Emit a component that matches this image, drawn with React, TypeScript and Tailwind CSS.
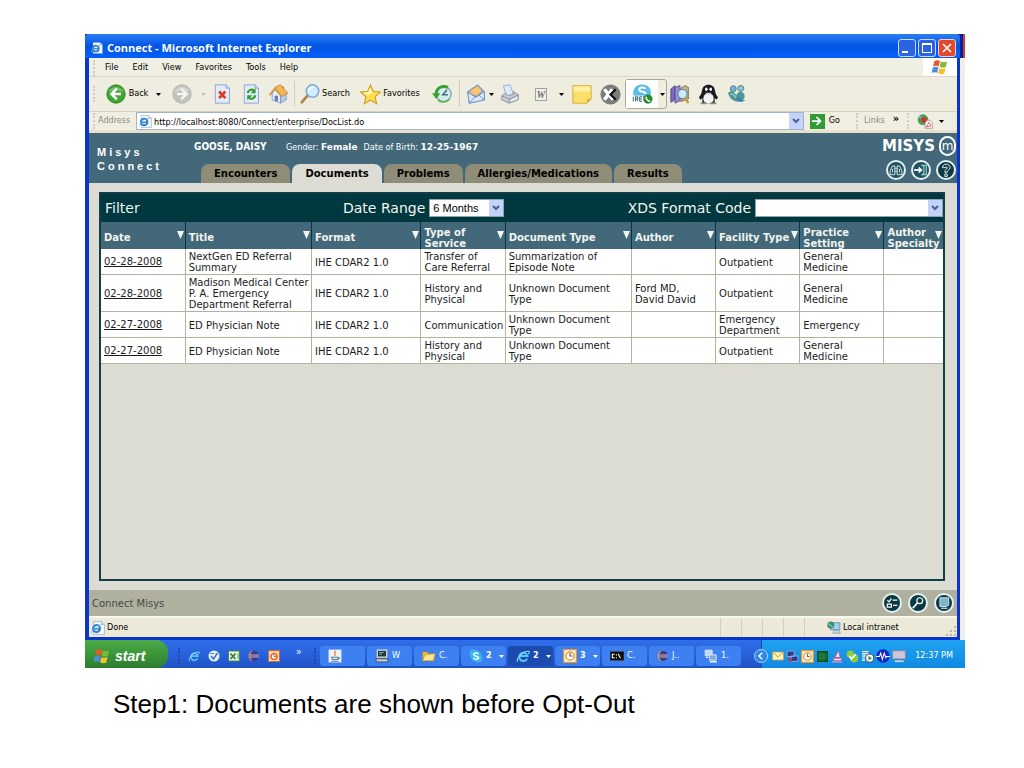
import { useState } from 'react';
import type { ReactNode } from 'react';

type DocRow = {
  date: string;
  title: string;
  format: string;
  service: string;
  docType: string;
  author: string;
  facility: string;
  setting: string;
  specialty: string;
};

const documents: DocRow[] = [
  { date: '02-28-2008', title: 'NextGen ED Referral\nSummary', format: 'IHE CDAR2 1.0', service: 'Transfer of\nCare Referral', docType: 'Summarization of\nEpisode Note', author: '', facility: 'Outpatient', setting: 'General\nMedicine', specialty: '' },
  { date: '02-28-2008', title: 'Madison Medical Center\nP. A. Emergency\nDepartment Referral', format: 'IHE CDAR2 1.0', service: 'History and\nPhysical', docType: 'Unknown Document\nType', author: 'Ford MD,\nDavid David', facility: 'Outpatient', setting: 'General\nMedicine', specialty: '' },
  { date: '02-27-2008', title: 'ED Physician Note', format: 'IHE CDAR2 1.0', service: 'Communication', docType: 'Unknown Document\nType', author: '', facility: 'Emergency\nDepartment', setting: 'Emergency', specialty: '' },
  { date: '02-27-2008', title: 'ED Physician Note', format: 'IHE CDAR2 1.0', service: 'History and\nPhysical', docType: 'Unknown Document\nType', author: '', facility: 'Outpatient', setting: 'General\nMedicine', specialty: '' },
];

const columns: { label: string; width: string }[] = [
  { label: 'Date', width: 'w-[10%]' },
  { label: 'Title', width: 'w-[15%]' },
  { label: 'Format', width: 'w-[13%]' },
  { label: 'Type of\nService', width: 'w-[10%]' },
  { label: 'Document Type', width: 'w-[15%]' },
  { label: 'Author', width: 'w-[10%]' },
  { label: 'Facility Type', width: 'w-[10%]' },
  { label: 'Practice\nSetting', width: 'w-[10%]' },
  { label: 'Author\nSpecialty', width: 'w-[7%]' },
];

const tabs = ['Encounters', 'Documents', 'Problems', 'Allergies/Medications', 'Results'];

/* ---------- icons ---------- */

function Svg({ size, box = 24, children }: { size: string; box?: number; children: ReactNode }) {
  return (
    <svg className={`shrink-0 ${size}`} viewBox={`0 0 ${box} ${box}`} fill="none" aria-hidden="true">
      {children}
    </svg>
  );
}

function IePage({ size = 'size-3.5' }: { size?: string }) {
  return (
    <Svg size={size}>
      <path d="M4 1h14l5 5v17H4z" fill="#f4f8fd" stroke="#7d9cc6" />
      <path d="M18 1v5h5" fill="#cfe0f3" stroke="#7d9cc6" />
      <circle cx="9.500" cy="13" r="6" stroke="#2d7fc9" strokeWidth="3.500" />
      <path d="M4 13.500h12" stroke="#2d7fc9" strokeWidth="2.500" />
      <path d="M1 20C3 12 10 6 18 7" stroke="#6fb4ea" strokeWidth="1.500" />
    </Svg>
  );
}

function IeLogo({ size = 'size-3.5' }: { size?: string }) {
  return (
    <Svg size={size}>
      <path d="M19 16.500A7 7 0 1 1 19.500 12H7" stroke="#5cc3f5" strokeWidth="3.500" />
      <path d="M3 22C-1 17 12 3 22 4c2 1 0 4-1 5" stroke="#8fdcff" strokeWidth="1.800" />
    </Svg>
  );
}

function WindowsFlag({ size = 'size-[18px]' }: { size?: string }) {
  return (
    <Svg size={size}>
      <path d="M4.500 4C7 2.500 9.500 2.700 12 4l-1.700 7.200C8 10 5.500 10 2.800 11.200z" fill="#e8592b" />
      <path d="M13.200 4.600c3 1.500 5.500 1.300 8.300 0l-1.800 7.300c-2.800 1.300-5.400 1.200-8.200-.2z" fill="#7fb93c" />
      <path d="M2.500 12.600c2.700-1.200 5.100-1.200 7.500 0l-1.700 7.200c-2.300-1.200-4.800-1.100-7.500 0z" fill="#4a8fe0" />
      <path d="M11.200 13.200c2.800 1.400 5.400 1.500 8.200.2l-1.700 7.200c-2.800 1.300-5.400 1.300-8.200-.2z" fill="#f6c231" />
    </Svg>
  );
}

function NavArrow({ back }: { back?: boolean }) {
  return (
    <Svg size="size-5">
      <circle cx="12" cy="12" r="11" fill={back ? '#3fa535' : '#c3c3bd'} stroke={back ? '#2b7d24' : '#acaca5'} />
      <path d="M3 10C5 2 19 2 21 10c-5-3-13-3-18 0z" fill="#fff" opacity=".3" />
      {back ? (
        <path d="M13 5.500 6.500 12l6.500 6.500M7 12h11" stroke="#fff" strokeWidth="3" />
      ) : (
        <path d="M11 5.500 17.500 12 11 18.500M17 12H6" stroke="#f4f4f0" strokeWidth="3" />
      )}
    </Svg>
  );
}

function StopIcon() {
  return (
    <Svg size="size-5">
      <path d="M4 1h13l4 4v18H4z" fill="#e1ebfb" stroke="#7f9cd0" />
      <path d="M17 1v4h4" fill="#c7d9f2" stroke="#7f9cd0" />
      <path d="m8.500 9 7.500 8m0-8-7.500 8" stroke="#dc3a22" strokeWidth="3.200" />
    </Svg>
  );
}

function RefreshIcon() {
  return (
    <Svg size="size-5">
      <path d="M4 1h13l4 4v18H4z" fill="#e1ebfb" stroke="#7f9cd0" />
      <path d="M17 1v4h4" fill="#c7d9f2" stroke="#7f9cd0" />
      <path d="M8 11c.5-4 5-5.500 7.500-3" stroke="#2f9b2b" strokeWidth="2.500" />
      <path d="M17.500 5v6h-6z" fill="#2f9b2b" />
      <path d="M17 13.500c-.5 4-5 5.500-7.500 3" stroke="#2f9b2b" strokeWidth="2.500" />
      <path d="M7.500 19.500v-6h6z" fill="#2f9b2b" />
    </Svg>
  );
}

function HomeIcon() {
  return (
    <Svg size="size-5">
      <path d="M16 3h3v5l-3-2z" fill="#b5563a" />
      <path d="M5 12 8 6l7 8v9L5 19z" fill="#e6eefb" stroke="#7a98cc" />
      <path d="m15 14 7-3v8l-7 4z" fill="#b5caec" stroke="#7a98cc" />
      <path d="m8 4 7-3 9 10-8 4z" fill="#f3b653" stroke="#bb7b22" strokeWidth=".8" />
      <path d="M8 4 1 13l2 1 5-7 8 9 1-1z" fill="#d9933a" />
      <path d="M8 14h4v7l-4-1z" fill="#5d7fbd" />
    </Svg>
  );
}

function SearchIcon() {
  return (
    <Svg size="size-5">
      <path d="m9 14-7 8" stroke="#b2814c" strokeWidth="3.200" strokeLinecap="round" />
      <circle cx="15" cy="8.500" r="7.500" fill="#d3ecfb" stroke="#7aa9d2" strokeWidth="1.800" />
      <path d="M10.500 8c.5-3 3-4.500 6-4" stroke="#fff" strokeWidth="1.800" />
    </Svg>
  );
}

function StarIcon() {
  return (
    <Svg size="size-[21px]">
      <path d="m12 1 3.200 7.500 8 .7-6 5.300 1.800 8L12 18.300l-7 4.200 1.800-8-6-5.300 8-.7z" fill="#ffdf4f" stroke="#cf9a1c" strokeWidth="1.200" />
      <path d="m12 4 2 6-6 3-4-3 5-.5z" fill="#fff6b8" />
    </Svg>
  );
}

function HistoryIcon() {
  return (
    <Svg size="size-5">
      <circle cx="14" cy="12" r="9" fill="#d7ebee" stroke="#7ba3a9" strokeWidth="1.500" />
      <path d="M5 12C5 5 12 1 19 4" stroke="#37a12c" strokeWidth="3.500" />
      <path d="M0 11h10l-5 7z" fill="#37a12c" />
      <path d="m18 7-5 6h6" stroke="#446d78" strokeWidth="1.800" />
      <path d="M7 19c4 4 11 3 14-1" stroke="#5fb457" strokeWidth="2" />
    </Svg>
  );
}

function MailIcon() {
  return (
    <Svg size="size-5">
      <path d="m2 9 12-8 8 8v10L4 23z" fill="#8fb3e6" stroke="#6486c0" />
      <path d="m5 8 9-6 5 6-6 6-8-2z" fill="#f8c572" stroke="#c98f35" strokeWidth=".6" />
      <path d="m2 10 10 6 10-7v10L4 23z" fill="#dceafb" stroke="#6486c0" />
      <path d="m4 23 7-8m11 4-7-6" stroke="#6486c0" />
    </Svg>
  );
}

function PrinterIcon() {
  return (
    <Svg size="size-5">
      <path d="m4 2 8-1 4 11-8 3z" fill="#dfeafc" stroke="#8ea5cd" />
      <path d="m2 14 5-3 2 3 8-2-1-3 6 4v6l-11 4-9-4z" fill="#c9ccd4" stroke="#868b96" />
      <path d="m2 14 9 4 11-5M11 18v5" stroke="#868b96" />
      <path d="m13 20 8-3" stroke="#f3f3f3" strokeWidth="1.500" />
    </Svg>
  );
}

function NoteIcon() {
  return (
    <Svg size="size-5">
      <path d="M1 2h22v16l-5 5H1z" fill="#fcdf6a" stroke="#cfa62e" />
      <path d="M2 3h20v6H2z" fill="#fff0a4" />
      <path d="M18 23v-5h5z" fill="#d7ae38" />
    </Svg>
  );
}

function MessengerIcon() {
  return (
    <Svg size="size-[21px]">
      <circle cx="12" cy="12" r="11.500" fill="#7b7c7c" />
      <path d="m5 6 10 12M14 6l-9 12" stroke="#fff" strokeWidth="4" />
      <path d="m18 6-6 6 6 6" stroke="#111" strokeWidth="2.500" />
    </Svg>
  );
}

function SkypeIcon({ size = 'size-3.5' }: { size?: string }) {
  return (
    <Svg size={size}>
      <circle cx="8" cy="8" r="7" fill="#36b8ee" />
      <circle cx="16" cy="16" r="7" fill="#36b8ee" />
      <circle cx="12" cy="12" r="9.500" fill="#36b8ee" />
      <path d="M16 8.500C14 6 8 6.500 8 9.500c0 4 8.500 1.500 8.500 5.500 0 3-6.500 3.500-9 .5" stroke="#fff" strokeWidth="2.600" />
    </Svg>
  );
}

function SkypePhoneIcon() {
  return (
    <Svg size="size-[22px]">
      <path d="M3 14C0 5 9 0 14 2c7 1 9 7 7 12z" fill="#5bbbe8" />
      <path d="M16 6.500C14 4 8.500 4.500 9 7.500c.5 3 7 1 7 4.500" stroke="#fff" strokeWidth="2.200" />
      <path d="M1 14h14v7H1z" fill="#fff" />
      <path d="M2.500 15v5m2.500 0v-5h2.500v2.500H5m2.500 2.500L6.500 17.500M12 15H9.500v5H12m-2.500-2.500H12M13 15h2.500m-1.200 0v5" stroke="#2d5a70" />
      <circle cx="18.500" cy="17.500" r="5" fill="#23902c" />
      <path d="M16.500 15c0 3 2 5 4.500 5" stroke="#fff" strokeWidth="1.700" />
    </Svg>
  );
}

function BooksIcon() {
  return (
    <Svg size="size-5">
      <path d="m1 6 5-4v17l-5 3z" fill="#7b6eb9" stroke="#4d4389" />
      <path d="m6 4 6-2v18l-6 3z" fill="#9b8fd1" stroke="#4d4389" />
      <path d="m13 5 5-3 4 2v14l-9 3z" fill="#c9b58c" stroke="#78603f" />
      <circle cx="15" cy="12" r="5.500" fill="#cfeaf7" stroke="#5b8fb0" strokeWidth="1.500" />
      <path d="m18 16 4 7" stroke="#c89b3a" strokeWidth="3" />
    </Svg>
  );
}

function PenguinIcon() {
  return (
    <Svg size="size-[21px]">
      <path d="M1 15C4 12 4 10 5 6c1-7 13-7 14 0 1 4 1 6 4 9l-2 3-2-2v6H5v-6l-2 2z" fill="#17191c" />
      <path d="M7 13c2-3 8-3 10 0 2 4 1 9-5 9s-7-5-5-9z" fill="#f2f2f2" />
      <ellipse cx="9.500" cy="6" rx="1.500" ry="2" fill="#fff" />
      <ellipse cx="14.500" cy="6" rx="1.500" ry="2" fill="#fff" />
      <path d="M8 10h8l-4 2.500z" fill="#d6d6d6" />
      <path d="M3 22h7m4 0h7" stroke="#8b8b8b" strokeWidth="2" />
    </Svg>
  );
}

function PeopleIcon() {
  return (
    <Svg size="size-[18px]">
      <circle cx="7" cy="5" r="4" fill="#7fb1cc" stroke="#396985" />
      <circle cx="17" cy="4.500" r="4" fill="#8ec4cf" stroke="#396985" />
      <path d="M0 10c4-3 9-1 11 4 1-5 7-7 10-3 3 5 0 10-5 11-8 1-14-3-16-12z" fill="#4d9a94" />
      <path d="M3 12c3 0 6 2 8 5" stroke="#a7d9d5" strokeWidth="1.500" />
      <path d="M11 17c-1 6 8 7 13 3-4 1-8 0-8-4z" fill="#3c7fae" />
    </Svg>
  );
}

function SortArrow() {
  return (
    <svg className="absolute top-[9px] right-px h-2 w-[7px]" viewBox="0 0 7 8" aria-hidden="true">
      <path d="M0 0h7L3.500 8z" fill="#f4f6f0" />
    </svg>
  );
}

function Caret({ className = 'fill-black' }: { className?: string }) {
  return (
    <svg className={`h-[3px] w-[5px] shrink-0 ${className}`} viewBox="0 0 5 3" aria-hidden="true">
      <path d="M0 0h5L2.500 3z" />
    </svg>
  );
}

function Grip({ light }: { light?: boolean }) {
  return <span className={`h-4 w-0 shrink-0 border-l-2 border-dotted ${light ? 'border-[#1c46b0]' : 'border-[#d0cdbe]'}`} />;
}

function DropArrow() {
  return (
    <span className="pointer-events-none flex w-3.5 shrink-0 items-center justify-center bg-[#c3d3fb]">
      <svg className="h-1.5 w-2" viewBox="0 0 8 6" fill="none" aria-hidden="true">
        <path d="m1 1 3 3 3-3" stroke="#48618f" strokeWidth="2" />
      </svg>
    </span>
  );
}

function RoundButton({ label, dark, children }: { label: string; dark?: boolean; children: ReactNode }) {
  return (
    <button
      aria-label={label}
      className={`flex size-5 items-center justify-center rounded-full border-2 border-[#e4f0f0] ${dark ? 'bg-[#0b3a45]' : 'bg-[#20525f]'}`}
    >
      <Svg size="size-3.5">{children}</Svg>
    </button>
  );
}

function ToolButton({ label, className, children }: { label: string; className: string; children: ReactNode }) {
  return (
    <button aria-label={label} className={`flex shrink-0 items-center justify-center ${className}`}>
      {children}
    </button>
  );
}

/* ---------- browser chrome ---------- */

function TitleBar() {
  return (
    <div className="flex h-6 items-center rounded-t-sm bg-linear-to-b from-[#2b7df5] via-[#0054e3] to-[#0560fb] pt-1 pr-1 pl-1.5">
      <IePage size="size-3" />
      <h1 className="ml-1 font-[Open_Sans,sans-serif] text-[11px] leading-4 font-bold text-white">Connect - Microsoft Internet Explorer</h1>
      <div className="ml-auto flex gap-0.5">
        <button aria-label="Minimize" className="flex size-[18px] items-end rounded-[3px] border border-[#c9dcfb] bg-[#2c62e4] p-[3px]">
          <span className="h-0.5 w-1.5 bg-white" />
        </button>
        <button aria-label="Maximize" className="size-[18px] rounded-[3px] border border-[#c9dcfb] bg-[#2c62e4] p-[3px]">
          <span className="block size-full border border-t-2 border-white" />
        </button>
        <button aria-label="Close" className="flex size-[18px] items-center justify-center rounded-[3px] border border-[#f3cfc4] bg-[#e0492a]">
          <Svg size="size-3">
            <path d="m4 4 16 16M20 4 4 20" stroke="#fff" strokeWidth="3.500" />
          </Svg>
        </button>
      </div>
    </div>
  );
}

function MenuBar() {
  return (
    <div className="flex h-[19px] items-stretch border-b border-[#dcd9c8] bg-[#f0efe4] text-[9px] text-black">
      <div className="flex flex-1 items-center pt-px pl-1">
        <Grip />
        <nav className="ml-2.5 flex gap-3.5">
          {['File', 'Edit', 'View', 'Favorites', 'Tools', 'Help'].map((m) => (
            <button key={m}>{m}</button>
          ))}
        </nav>
      </div>
      <div className="flex w-[34px] items-center justify-center bg-white">
        <WindowsFlag />
      </div>
    </div>
  );
}

function ToolBar() {
  return (
    <div className="flex h-[35px] items-stretch border-b border-[#d5d2c0] bg-[#efeddf] text-[9px] text-black">
      <span className="flex w-3.5 items-center pl-1">
        <Grip />
      </span>
      <ToolButton label="Back" className="w-12 gap-[3px]">
        <NavArrow back />
        <span>Back</span>
      </ToolButton>
      <ToolButton label="Back history" className="w-3.5"><Caret /></ToolButton>
      <ToolButton label="Forward" className="w-[34px]"><NavArrow /></ToolButton>
      <ToolButton label="Forward history" className="w-2"><Caret className="fill-[#c3c3bd]" /></ToolButton>
      <ToolButton label="Stop" className="w-[30px]"><StopIcon /></ToolButton>
      <ToolButton label="Refresh" className="w-7"><RefreshIcon /></ToolButton>
      <ToolButton label="Home" className="w-[26px]"><HomeIcon /></ToolButton>
      <span className="mx-[3px] my-1 w-px bg-[#d0cdbb]" />
      <ToolButton label="Search" className="w-[54px] gap-0.5">
        <SearchIcon />
        <span>Search</span>
      </ToolButton>
      <ToolButton label="Favorites" className="w-[76px] gap-0.5">
        <StarIcon />
        <span>Favorites</span>
      </ToolButton>
      <ToolButton label="History" className="w-7"><HistoryIcon /></ToolButton>
      <span className="mx-[3px] my-1 w-px bg-[#d0cdbb]" />
      <ToolButton label="Mail" className="w-[26px]"><MailIcon /></ToolButton>
      <ToolButton label="Mail options" className="w-1"><Caret /></ToolButton>
      <ToolButton label="Print" className="w-[34px]"><PrinterIcon /></ToolButton>
      <ToolButton label="Edit with Word" className="w-7">
        <span className="border border-[#a2a29c] bg-[#efefea] px-px font-[Liberation_Serif,serif] text-[10px] leading-[11px] font-bold text-[#6f6f6c] italic">W</span>
      </ToolButton>
      <ToolButton label="Edit options" className="w-3"><Caret /></ToolButton>
      <ToolButton label="Discuss" className="w-[30px]"><NoteIcon /></ToolButton>
      <ToolButton label="Messenger" className="w-[26px]"><MessengerIcon /></ToolButton>
      <div className="my-0.5 ml-0.5 flex rounded-[3px] border border-[#a9a996]">
        <ToolButton label="Skype" className="w-8 bg-white"><SkypePhoneIcon /></ToolButton>
        <ToolButton label="Skype options" className="w-2"><Caret /></ToolButton>
      </div>
      <ToolButton label="Research" className="w-[26px]"><BooksIcon /></ToolButton>
      <ToolButton label="QQ" className="w-[30px]"><PenguinIcon /></ToolButton>
      <ToolButton label="Windows Messenger" className="w-7"><PeopleIcon /></ToolButton>
    </div>
  );
}

function AddressBar() {
  return (
    <div className="flex h-[21px] items-center border-b-[3px] border-[#e7e0cb] bg-[#f0eee1] text-[9px]">
      <span className="flex pl-1"><Grip /></span>
      <label htmlFor="address" className="ml-[3px] w-[38px] text-[#8b8a80]">Address</label>
      <div className="flex flex-1 items-stretch border border-[#9fb3cf] bg-white">
        <span className="flex items-center px-0.5"><IePage size="size-[13px]" /></span>
        <input id="address" defaultValue="http://localhost:8080/Connect/enterprise/DocList.do" className="h-4 min-w-0 flex-1 bg-transparent pt-px text-black outline-none" />
        <DropArrow />
      </div>
      <button className="ml-1.5 flex items-center gap-1 text-black">
        <span className="flex size-[15px] items-center justify-center bg-[#329a34]">
          <Svg size="size-3">
            <path d="M2 12h16M11 4l8 8-8 8" stroke="#fff" strokeWidth="3.500" />
          </Svg>
        </span>
        Go
      </button>
      <div className="ml-4 flex w-[101px] items-center">
        <Grip />
        <button className="ml-1.5 text-[#8b8a80]">Links</button>
        <button aria-label="More links" className="ml-2 pb-1 text-[11px] leading-3 font-bold text-black">»</button>
        <span className="ml-2 flex"><Grip /></span>
        <button aria-label="Convert to PDF" className="ml-2 flex items-center gap-1.5">
          <Svg size="size-4">
            <circle cx="9" cy="10" r="8" fill="#4f9a54" />
            <path d="M3 5c4 2 3 6 8 7" stroke="#7fb7e8" strokeWidth="3" />
            <path d="M12 11h8l3 3v9H12z" fill="#f4f4f4" stroke="#8a8a8a" />
            <path d="M5 7h9v7H8z" fill="#cf2f24" />
            <path d="m14 21 4-7 3 5z" stroke="#cf2f24" />
          </Svg>
          <Caret />
        </button>
      </div>
    </div>
  );
}

function StatusBar() {
  return (
    <div className="flex h-[21px] items-center border-t-2 border-[#f8f7f0] bg-[#ece9d8] text-[9px] text-black">
      <span className="flex items-center gap-0.5 pl-0.5">
        <IePage />
        Done
      </span>
      <div className="ml-auto flex h-full">
        {[0, 1, 2, 3, 4].map((i) => (
          <span key={i} className="w-[21px] border-l border-[#d2cfbd]" />
        ))}
      </div>
      <span className="flex w-[120px] items-center gap-0.5 pl-0.5">
        <Svg size="size-3.5">
          <path d="M6 3h16v12H6z" fill="#9fd0f2" stroke="#6788a8" strokeWidth="1.500" />
          <path d="M12 16h9l2 5H10z" fill="#c9d6e2" stroke="#6788a8" />
          <circle cx="6.500" cy="7" r="6" fill="#3b8f63" />
          <path d="M2 5c4 0 3 4 8 5" stroke="#7ec4f0" strokeWidth="2" />
        </Svg>
        Local intranet
      </span>
      <svg className="size-3 self-end" viewBox="0 0 12 12" fill="#b8b5a2" aria-hidden="true">
        <path d="M9 1h2v2H9zM9 5h2v2H9zM5 5h2v2H5zM9 9h2v2H9zM5 9h2v2H5zM1 9h2v2H1z" />
      </svg>
    </div>
  );
}

/* ---------- Misys Connect ---------- */

function AppHeader({ tab, onTab }: { tab: string; onTab: (t: string) => void }) {
  return (
    <header className="flex h-[50px] bg-[#42687a] text-white">
      <div className="w-[105px] pt-3 pl-2 font-[Liberation_Sans,sans-serif] text-[11px] leading-3.5 font-bold tracking-[3px]">
        Misys
        <br />
        Connect
      </div>
      <div className="flex flex-1 flex-col justify-between">
        <p className="flex items-baseline pt-1.5 text-[9px]">
          <strong className="w-[92px] text-[10px]">GOOSE, DAISY</strong>
          <span>Gender: <strong className="font-[DejaVu_Sans,sans-serif]">Female</strong></span>
          <span className="ml-1.5">Date of Birth: <strong className="font-[DejaVu_Sans,sans-serif]">12-25-1967</strong></span>
        </p>
        <nav className="flex gap-0.5 pl-[7px] font-[DejaVu_Sans,sans-serif] text-[10px] font-bold text-black">
          {tabs.map((t) => (
            <button
              key={t}
              onClick={() => onTab(t)}
              className={`h-[19px] rounded-t-lg px-[13px] ${t === tab ? 'bg-[#dcdcd4]' : 'bg-[#8f8c78]'}`}
            >
              {t}
            </button>
          ))}
        </nav>
      </div>
      <div className="flex flex-col items-end gap-1 pt-[3px] pr-px">
        <div className="flex items-center gap-1">
          <span className="font-[DejaVu_Sans,sans-serif] text-[15px] leading-5 font-bold">MISYS</span>
          <span className="flex h-5 w-[17px] items-center justify-center rounded-full border-2 border-white font-[DejaVu_Sans,sans-serif] text-[12px] leading-none">m</span>
        </div>
        <div className="flex gap-[5px]">
          <RoundButton label="Find patient">
            <path d="M2 20v-7l4-8h4v15zM14 20V5h4l4 8v7zM10 9h4M10 14h4M6 10v6m12-6v6" stroke="#dff0f0" strokeWidth="1.600" />
          </RoundButton>
          <RoundButton label="Log out">
            <path d="M0 12h11" stroke="#fff" strokeWidth="3" />
            <path d="m8 6 7 6-7 6z" fill="#fff" />
            <path d="M14 4h7v16h-7l3-2V6z" stroke="#9fe0d8" strokeWidth="1.800" />
          </RoundButton>
          <RoundButton label="Help" dark>
            <path d="M6 8c0-8 13-8 13 0 0 4-5 4-5 8h-4c0-6 4-5 4-8 0-2-3-2-3 0zM10 19h4v4h-4z" stroke="#fff" strokeWidth="1.500" />
          </RoundButton>
        </div>
      </div>
    </header>
  );
}

function FilterBar() {
  const [range, setRange] = useState('6 Months');
  const [code, setCode] = useState('');

  return (
    <div className="flex h-7 items-center bg-[#003840] text-[14px] text-[#f2f4ee]">
      <h2 className="w-[242px] pl-1">Filter</h2>
      <label htmlFor="range">Date Range</label>
      <div className="ml-1 flex h-[18px] w-[75px] border border-[#8fa5ad] bg-white">
        <select
          id="range"
          value={range}
          onChange={(e) => setRange(e.target.value)}
          className="min-w-0 flex-1 appearance-none pl-[3px] font-[Liberation_Sans,sans-serif] text-[11px] text-black outline-none"
        >
          <option>6 Months</option>
        </select>
        <DropArrow />
      </div>
      <label htmlFor="code" className="ml-auto">XDS Format Code</label>
      <div className="ml-1 flex h-[18px] w-[188px] border border-[#8fa5ad] bg-white">
        <select
          id="code"
          value={code}
          onChange={(e) => setCode(e.target.value)}
          className="min-w-0 flex-1 appearance-none text-[11px] text-black outline-none"
        >
          <option value="" />
        </select>
        <DropArrow />
      </div>
    </div>
  );
}

function DocTable() {
  return (
    <table className="w-full table-fixed border-collapse text-left text-[10px] leading-[11px]">
      <thead>
        <tr className="bg-[#42687a] text-[#f2f4ee]">
          {columns.map((c) => (
            <th key={c.label} className={`relative h-[27px] border-r border-[#003840] py-0 pt-1 pl-[3px] align-middle text-[10px] font-bold whitespace-pre last:border-r-0 ${c.width}`}>
              {c.label}
              <SortArrow />
            </th>
          ))}
        </tr>
      </thead>
      <tbody className="bg-white text-[#1c1c1c]">
        {documents.map((d, i) => (
          <tr key={i} className="border-b border-[#b3b3a0]">
            <td className="border-r border-[#b3b3a0] pl-[3px]">
              <a href="#document" className="underline">{d.date}</a>
            </td>
            {[d.title, d.format, d.service, d.docType, d.author, d.facility, d.setting, d.specialty].map((text, j) => (
              <td key={j} className="border-r border-[#b3b3a0] pt-0.5 pb-px pl-[3px] whitespace-pre last:border-r-0">
                {text}
              </td>
            ))}
          </tr>
        ))}
      </tbody>
    </table>
  );
}

function AppFooter() {
  return (
    <footer className="flex h-[26px] items-center bg-[#b0b09e] pr-[3px] pl-[3px] font-[DejaVu_Sans,sans-serif] text-[10px] text-[#444b44]">
      Connect Misys
      <div className="ml-auto flex gap-1.5">
        <RoundButton label="Tasks" dark>
          <path d="m4 7 3 3 4-6M13 7h8M4 14h7v5H4zM14 16h7" stroke="#fff" strokeWidth="2" />
        </RoundButton>
        <RoundButton label="Security" dark>
          <circle cx="15" cy="8" r="5" stroke="#fff" strokeWidth="2" />
          <path d="m11 12-8 9" stroke="#fff" strokeWidth="3" />
        </RoundButton>
        <RoundButton label="Workstation" dark>
          <path d="M5 3h15v13l-4 2H5z" fill="#7fb4c6" stroke="#d5edf2" strokeWidth="1.500" />
          <path d="M7 21h11" stroke="#d5edf2" strokeWidth="2" />
        </RoundButton>
      </div>
    </footer>
  );
}

/* ---------- taskbar ---------- */

function ExcelIcon() {
  return (
    <Svg size="size-3">
      <path d="M1 2h22v20H1z" fill="#f0f7ee" stroke="#3d8a44" strokeWidth="2" />
      <path d="m5 7 10 11M15 7 5 18" stroke="#2c7c36" strokeWidth="3.500" />
      <path d="M18 8h4m-4 4h4m-4 4h4" stroke="#2c7c36" strokeWidth="1.500" />
    </Svg>
  );
}

function EclipseIcon() {
  return (
    <Svg size="size-3">
      <circle cx="12" cy="12" r="10" fill="#43397f" />
      <path d="M9 2C2 8 2 16 9 22 0 22-2 3 9 2z" fill="#f09a4f" />
      <path d="M4 10h18M4 14h18" stroke="#cfcbe8" strokeWidth="1.800" />
    </Svg>
  );
}

function ClockIcon({ size = 'size-3.5' }: { size?: string }) {
  return (
    <Svg size={size}>
      <path d="M1 1h22v22H1z" fill="#fff4dc" stroke="#e9952e" strokeWidth="2.500" />
      <circle cx="12" cy="12" r="7" fill="#fff" stroke="#d6871f" strokeWidth="2" />
      <path d="M12 7v5h4" stroke="#8b5a18" strokeWidth="2" />
    </Svg>
  );
}

function ComputersIcon({ size = 'size-3.5' }: { size?: string }) {
  return (
    <Svg size={size}>
      <path d="M2 2h12v9H2z" fill="#bcd9f5" stroke="#e8eef6" strokeWidth="1.500" />
      <path d="M9 10h12v9H9z" fill="#7fa8dd" stroke="#e8eef6" strokeWidth="1.500" />
      <path d="M10 22h12M3 14h4" stroke="#e8eef6" strokeWidth="2.500" />
    </Svg>
  );
}

function JavaIcon() {
  return (
    <Svg size="size-3.5">
      <path d="M1 1h22v22H1z" fill="#eef1f5" />
      <path d="M13 3c-5 4 3 5-2 9" stroke="#dd7a35" strokeWidth="2" />
      <path d="M6 14h11v4H8zM17 14c4 0 3 3-1 3M5 21h13" stroke="#5c7fa9" strokeWidth="1.800" />
    </Svg>
  );
}

const tasks: { name: string; text: string; icon: ReactNode; group?: boolean; active?: boolean }[] = [
  { name: 'Java', text: '', icon: <JavaIcon /> },
  {
    name: 'Terminal', text: 'W', icon: (
      <Svg size="size-3.5">
        <path d="M4 2h16v12H4z" fill="#23323b" stroke="#e3e3dc" strokeWidth="2" />
        <path d="M2 17h20v5H2z" fill="#d7d6cb" stroke="#222" />
        <path d="M7 6h8M7 9h5" stroke="#7fd0a0" strokeWidth="1.500" />
      </Svg>
    ),
  },
  {
    name: 'Folder', text: 'C.', icon: (
      <Svg size="size-3.5">
        <path d="M1 5h8l2 3h10v12H1z" fill="#e9bb43" stroke="#b78a23" />
        <path d="m5 10 18-2-4 12H1z" fill="#fce791" stroke="#b78a23" />
      </Svg>
    ),
  },
  { name: 'Skype', text: '2', icon: <SkypeIcon />, group: true },
  { name: 'Internet Explorer', text: '2', icon: <IeLogo />, group: true, active: true },
  { name: 'Outlook', text: '3', icon: <ClockIcon />, group: true },
  {
    name: 'Command prompt', text: 'C.', icon: (
      <Svg size="size-3.5">
        <path d="M0 4h24v16H0z" fill="#0c0c0c" stroke="#62676f" />
        <path d="M8 9H4v6h4M11 9v2m0 3v2M14 8l4 8" stroke="#fff" strokeWidth="1.800" />
      </Svg>
    ),
  },
  { name: 'Eclipse', text: 'J..', icon: <EclipseIcon /> },
  { name: 'Network', text: '1.', icon: <ComputersIcon /> },
];

function Tray() {
  return (
    <div className="flex w-[204px] items-center border-l border-[#0c4fb6] bg-linear-to-b from-[#1fa3f0] to-[#1189e2] pt-1 text-[9px] text-white">
      <button aria-label="Show hidden icons" className="-ml-2 flex size-3.5 items-center justify-center rounded-full border border-[#a9d8fb] bg-[#2f86e6]">
        <Svg size="size-2.5"><path d="m15 4-8 8 8 8" stroke="#fff" strokeWidth="3.500" /></Svg>
      </button>
      <div className="ml-1 flex items-center gap-0.5">
        <Svg size="size-3">
          <path d="M1 4h22v16H1z" fill="#fdf3c0" stroke="#d49c2e" strokeWidth="1.500" />
          <path d="m2 5 10 9 10-9" stroke="#d49c2e" strokeWidth="2" />
        </Svg>
        <Svg size="size-[13px]">
          <path d="M2 2h13v10H2zM9 11h13v10H9z" fill="#303a8a" stroke="#aab4dc" strokeWidth="1.500" />
          <path d="m4 15 6 6" stroke="#d22" strokeWidth="3" />
        </Svg>
        <ClockIcon size="size-[13px]" />
        <Svg size="size-[13px]">
          <path d="M3 3h18v18H3z" fill="#136b2d" stroke="#0a4219" strokeWidth="2" />
          <path d="M8 3v18M13 3v18M3 9h18M3 15h18" stroke="#2c9148" />
        </Svg>
        <Svg size="size-[13px]">
          <path d="m14 1-7 13h10zM3 15h18l-3 5H6z" fill="#e9e9f4" stroke="#b3508c" strokeWidth="1.500" />
          <path d="M2 22h19" stroke="#f0a0c0" strokeWidth="2" />
        </Svg>
        <Svg size="size-[13px]">
          <circle cx="8" cy="8" r="7" fill="#8ccb3c" />
          <circle cx="15" cy="15" r="8" fill="#8ccb3c" />
          <path d="m6 11 4 5 8-8" stroke="#fff" strokeWidth="3" />
        </Svg>
        <Svg size="size-[13px]">
          <path d="M2 3h12M2 7h12M2 11h8M2 15h6M2 19h6" stroke="#e9edf2" strokeWidth="2.500" />
          <circle cx="16" cy="15" r="7.500" fill="#f5f7f5" stroke="#333" strokeWidth="1.500" />
          <path d="m14 11 6 4-6 4z" fill="#27823a" />
        </Svg>
        <Svg size="size-3.5">
          <circle cx="12" cy="12" r="11.500" fill="#1027c8" />
          <path d="M0 13h6l2-6 3 11 3-11 3 8 1-2h6" stroke="#fff" strokeWidth="1.800" />
        </Svg>
        <Svg size="size-3.5">
          <path d="M1 3h22v14H1z" fill="#cdc6da" stroke="#8b84a0" strokeWidth="1.500" />
          <path d="M5 21h15" stroke="#d8d4e0" strokeWidth="3" />
        </Svg>
      </div>
      <time className="mr-3 ml-auto whitespace-nowrap">12:37 PM</time>
    </div>
  );
}

function TaskBar() {
  return (
    <div className="flex h-7 items-stretch bg-linear-to-b from-[#2e6fe8] via-[#2862dc] to-[#1f52c4] text-[9px] text-white">
      <button className="flex w-[83px] items-center gap-1 rounded-r-xl bg-linear-to-b from-[#4cab48] via-[#3a963a] to-[#2e7c2f] pt-1 pl-2 font-[Liberation_Sans,sans-serif] text-[14px] font-bold italic">
        <WindowsFlag />
        start
      </button>
      <div className="flex w-[152px] items-center gap-2 pt-1 pl-2.5">
        <Grip light />
        <IeLogo size="size-3" />
        <Svg size="size-3">
          <circle cx="12" cy="12" r="11" fill="#e8f1fb" />
          <path d="M6 12l5 6 8-12" stroke="#3a76be" strokeWidth="3" />
          <path d="M4 7h9" stroke="#5d93d2" strokeWidth="2" />
        </Svg>
        <ExcelIcon />
        <EclipseIcon />
        <Svg size="size-3">
          <path d="M1 1h22v22H1z" fill="#f7e4d3" stroke="#d9662b" strokeWidth="2.500" />
          <circle cx="12" cy="13" r="6" fill="#fff" stroke="#d9662b" strokeWidth="3" />
          <path d="M12 7v6h6" stroke="#d9662b" strokeWidth="2" />
        </Svg>
        <button aria-label="More shortcuts" className="ml-2 pb-2 text-[10px] leading-3">»</button>
        <span className="ml-auto flex pr-1"><Grip light /></span>
      </div>
      <div className="flex gap-0.5 pt-1.5 pb-0.5">
        {tasks.map((t) => (
          <button
            key={t.name}
            aria-label={t.name}
            className={`flex w-[45px] items-center gap-[3px] rounded-[3px] pl-2 ${t.active ? 'bg-[#1c4bb0]' : 'bg-[#3c80f2]'}`}
          >
            {t.icon}
            <span className={t.group ? 'font-bold' : ''}>{t.text}</span>
            {t.group && <span className="mr-0.5 ml-auto flex"><Caret className="fill-white" /></span>}
          </button>
        ))}
      </div>
      <div className="ml-auto flex">
        <Tray />
      </div>
    </div>
  );
}

export default function App() {
  const [tab, setTab] = useState('Documents');

  return (
    <div className="flex min-h-screen flex-col bg-white pt-[34px] pr-[59px] pl-[85px] font-[DejaVu_Sans_Condensed,sans-serif]">
      <div className="flex flex-1 flex-col">
        <div className="flex flex-1">
          <div className="flex min-w-0 flex-1 flex-col bg-[#0a2cc0]">
            <TitleBar />
            <div className="flex flex-1 flex-col border-x-4 border-r-[3px] border-b-[3px] border-[#0a35cc]">
              <MenuBar />
              <ToolBar />
              <AddressBar />
              <AppHeader tab={tab} onTab={setTab} />
              <main className="flex flex-1 bg-[#dcdcd4] pt-[9px] pr-3 pb-[9px] pl-2.5 font-[DejaVu_Sans,sans-serif]">
                <section className="flex-1 border-2 border-[#123f46]">
                  <FilterBar />
                  <DocTable />
                </section>
              </main>
              <AppFooter />
              <StatusBar />
            </div>
          </div>
          {/* sliver of the window behind */}
          <div className="flex w-[5px] flex-col bg-[#efeee9]">
            <span className="h-6 border-r-2 border-[#c8402c] bg-[#0a1f9c]" />
          </div>
        </div>
        <TaskBar />
      </div>
      <p className="pt-5 pb-12 pl-7 font-[Liberation_Sans,sans-serif] text-[26px] leading-8 text-black">
        Step1: Documents are shown before Opt-Out
      </p>
    </div>
  );
}
